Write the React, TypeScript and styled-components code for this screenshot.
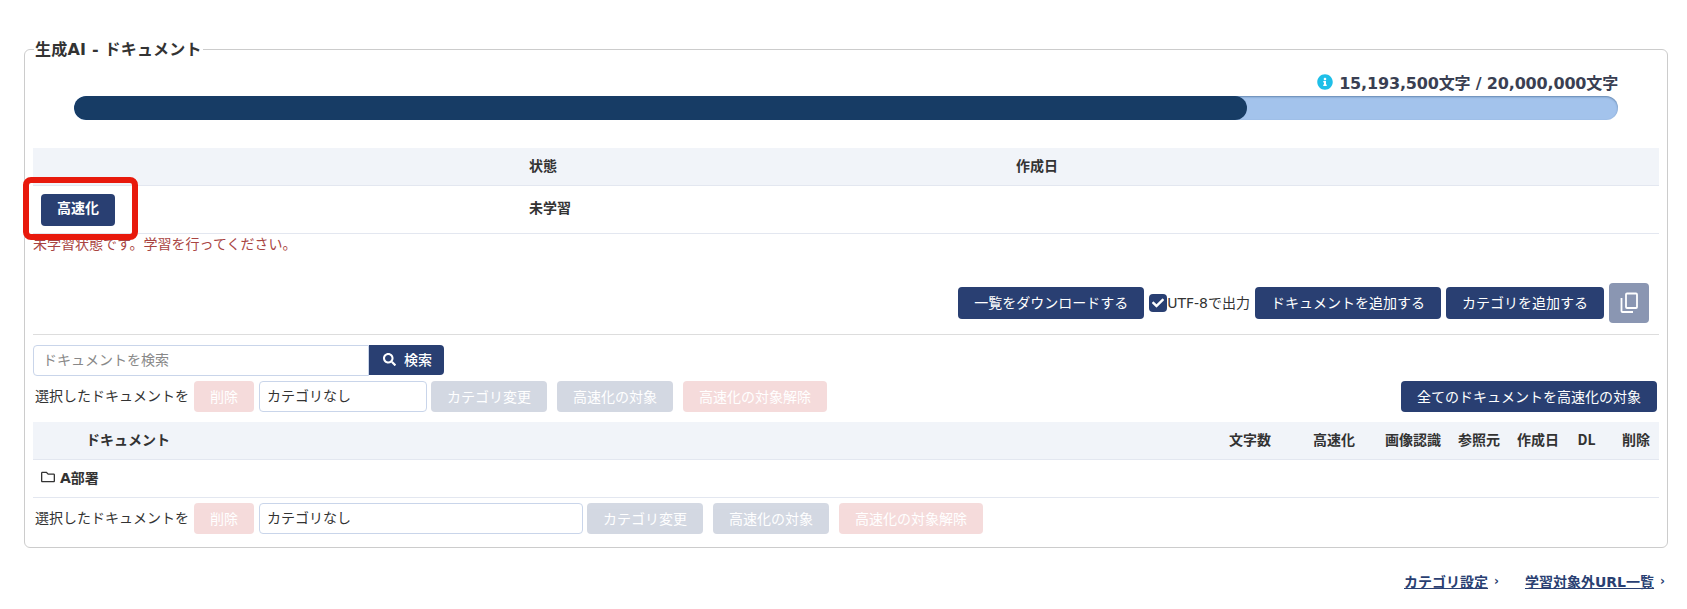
import { createGlobalStyle, styled } from "styled-components";
import { FaCheck, FaInfoCircle, FaRegFolder, FaSearch } from "react-icons/fa";

const GlobalStyle = createGlobalStyle`
  body {
    margin: 0;
    background: #ffffff;
    color: #333333;
    font-family: "DejaVu Sans", "Noto Sans CJK JP", sans-serif;
    font-size: 14px;
  }
`;

const Page = styled.div`
  width: 1687px;
  height: 609px;
  box-sizing: border-box;
  padding: 38px 19px 0 24px;
  overflow: hidden;
`;

const Panel = styled.fieldset`
  margin: 0;
  padding: 0 8px 12px;
  height: 510px;
  box-sizing: border-box;
  border: 1px solid #cccccc;
  border-radius: 6px;
  min-width: 0;
`;

const Title = styled.legend`
  margin-left: 1px;
  padding: 2px 1px 0;
  font-size: 16px;
  line-height: 20px;
  font-weight: 700;
  letter-spacing: 0.2px;
  color: #333333;
`;

const Usage = styled.div`
  display: flex;
  justify-content: flex-end;
  align-items: center;
  gap: 6px;
  height: 24px;
  margin-top: 10px;
  padding-right: 41px;
  font-size: 16px;
  font-weight: 700;
  letter-spacing: -0.17px;
  color: #3a3f52;
`;

const Bar = styled.div`
  height: 24px;
  margin: 2px 41px 0;
  border-radius: 12px;
  background: #a3c3ec;
  box-shadow: inset 0 1px 2px rgba(23, 60, 101, 0.45);
  overflow: hidden;
`;

const BarFill = styled.div`
  height: 100%;
  border-radius: 12px;
  background: #173c65;
`;

const StatusHead = styled.div`
  display: grid;
  grid-template-columns: 496px 487px 1fr;
  align-items: center;
  height: 38px;
  margin-top: 28px;
  padding-bottom: 4px;
  background: #f1f4f9;
  border-bottom: 1px solid #e3e7f0;
  box-sizing: border-box;
  font-weight: 700;
`;

const StatusRow = styled.div`
  display: grid;
  grid-template-columns: 496px 487px 1fr;
  align-items: center;
  height: 48px;
  border-bottom: 1px solid #e3e7f0;
  box-sizing: border-box;
  font-weight: 700;
`;

const StatusText = styled.span`
  padding-bottom: 6px;
`;

const ButtonCell = styled.div`
  padding-left: 8px;
`;

const Marked = styled.span`
  position: relative;
  display: inline-flex;
`;

const Highlight = styled.span`
  position: absolute;
  top: -17px;
  left: -18px;
  right: -23px;
  bottom: -14px;
  border: 6px solid #e8190c;
  border-radius: 8px;
  pointer-events: none;
`;

const Btn = styled.button<{ $tone?: "navy" | "red"; $off?: boolean }>`
  height: 32px;
  padding: 0 16px 2px;
  border: none;
  border-radius: 4px;
  background: ${(p) => (p.$tone === "red" ? "#cf4f4f" : "#293f72")};
  color: #ffffff;
  font-family: inherit;
  font-size: 14px;
  font-weight: 400;
  white-space: nowrap;
  opacity: ${(p) => (p.$off ? 0.2 : 1)};
`;

const BoldBtn = styled(Btn)`
  padding-bottom: 6px;
  font-weight: 700;
`;

const SmallBtn = styled(Btn)`
  height: 31px;
`;

const ErrorText = styled.div`
  height: 24px;
  line-height: 20px;
  color: #a94442;
`;

const Toolbar = styled.div`
  display: flex;
  justify-content: flex-end;
  align-items: center;
  gap: 5px;
  height: 40px;
  margin-top: 25px;
  padding-right: 10px;
`;

const CheckLabel = styled.label`
  display: flex;
  align-items: center;
  font-size: 14px;
  color: #333333;
`;

const CheckText = styled.span`
  padding-bottom: 3px;
`;

const CheckBox = styled.span`
  display: flex;
  align-items: center;
  justify-content: center;
  width: 18px;
  height: 18px;
  border-radius: 4px;
  background: #293f72;
  color: #ffffff;
  font-size: 12px;
`;

const CopyBtn = styled.button`
  display: flex;
  align-items: center;
  justify-content: center;
  width: 40px;
  height: 40px;
  padding: 0;
  border: none;
  border-radius: 4px;
  background: #8a96b2;
  color: #ffffff;
`;

const Divider = styled.hr`
  height: 1px;
  margin: 11px 0 0;
  border: none;
  background: #dddddd;
`;

const SearchRow = styled.div`
  display: flex;
  align-items: flex-start;
  height: 36px;
  margin-top: 10px;
`;

const SearchInput = styled.input`
  width: 336px;
  height: 31px;
  box-sizing: border-box;
  padding: 0 9px 2px;
  border: 1px solid #c9d5ea;
  border-radius: 4px 0 0 4px;
  font-family: inherit;
  font-size: 14px;
  outline: none;
  &::placeholder {
    color: #888888;
  }
`;

const SearchBtn = styled.button`
  display: flex;
  align-items: center;
  gap: 8px;
  width: 75px;
  height: 30px;
  padding: 0 0 2px 14px;
  border: none;
  border-radius: 0 4px 4px 0;
  background: #293f72;
  color: #ffffff;
  font-family: inherit;
  font-size: 14px;
  font-weight: 500;
`;

const ActionRow = styled.div`
  display: flex;
  align-items: center;
  height: 31px;
  padding-left: 2px;
`;

const ActionLabel = styled.span`
  width: 159px;
  flex: none;
  padding-bottom: 3px;
  white-space: nowrap;
`;

const ActionSet = styled.div`
  display: flex;
  align-items: center;
  gap: 10px;
  margin-left: 4px;
`;

const CategorySelect = styled.select<{ $wide?: boolean }>`
  width: ${(p) => (p.$wide ? "324px" : "168px")};
  height: 31px;
  margin-left: 5px;
  padding: 0 7px 2px;
  box-sizing: border-box;
  appearance: none;
  border: 1px solid #c9d5ea;
  border-radius: 4px;
  background: #ffffff;
  color: #333333;
  font-family: inherit;
  font-size: 14px;
`;

const AllBtn = styled(SmallBtn)`
  margin-left: auto;
  margin-right: 2px;
`;

const DocHead = styled.div`
  display: grid;
  grid-template-columns: 1fr 84px 84px 74px 58px 60px 37px 54px;
  align-items: center;
  height: 38px;
  margin-top: 10px;
  padding-bottom: 4px;
  box-sizing: border-box;
  background: #f1f4f9;
  border-bottom: 1px solid #e3e7f0;
  font-weight: 700;
`;

const DocTitle = styled.span`
  padding-left: 53px;
`;

const DocCol = styled.span<{ $right?: boolean; $latin?: boolean }>`
  text-align: ${(p) => (p.$right ? "right" : "center")};
  padding-right: ${(p) => (p.$right ? "9px" : "0")};
  font-family: ${(p) => (p.$latin ? '"Noto Sans CJK JP", sans-serif' : "inherit")};
`;

const FolderRow = styled.div`
  display: flex;
  align-items: center;
  gap: 5px;
  height: 38px;
  margin-bottom: 5px;
  padding: 0 0 3px 8px;
  box-sizing: border-box;
  border-bottom: 1px solid #e3e7f0;
  font-size: 14px;
  font-weight: 700;
`;

const Links = styled.div`
  display: flex;
  justify-content: flex-end;
  gap: 26px;
  margin-top: 23px;
  padding-right: 3px;
`;

const LinkItem = styled.div`
  display: flex;
  align-items: center;
  gap: 6px;
`;

const FootLink = styled.a`
  color: #293f72;
  font-size: 14px;
  font-weight: 700;
  text-decoration: underline;
`;

const Arrow = styled.span`
  color: #293f72;
  font-size: 12px;
  font-weight: 700;
`;

const columns = ["文字数", "高速化", "画像認識", "参照元", "作成日"];

const Actions = ({ wide }: { wide?: boolean }) => (
  <>
    <ActionLabel>選択したドキュメントを</ActionLabel>
    <SmallBtn $tone="red" $off>
      削除
    </SmallBtn>
    <CategorySelect $wide={wide} defaultValue="none">
      <option value="none">カテゴリなし</option>
    </CategorySelect>
    <ActionSet>
      <SmallBtn $off>カテゴリ変更</SmallBtn>
      <SmallBtn $off>高速化の対象</SmallBtn>
      <SmallBtn $tone="red" $off>
        高速化の対象解除
      </SmallBtn>
    </ActionSet>
  </>
);

const App = () => {
  const used = 15193500;
  const limit = 20000000;

  return (
    <Page>
      <GlobalStyle />
      <Panel>
        <Title>生成AI - ドキュメント</Title>
        <Usage>
          <FaInfoCircle color="#1fbfe8" size={16} />
          <span>15,193,500文字 / 20,000,000文字</span>
        </Usage>
        <Bar>
          <BarFill style={{ width: `${(used / limit) * 100}%` }} />
        </Bar>

        <StatusHead>
          <span />
          <span>状態</span>
          <span>作成日</span>
        </StatusHead>
        <StatusRow>
          <ButtonCell>
            <Marked>
              <BoldBtn>高速化</BoldBtn>
              <Highlight />
            </Marked>
          </ButtonCell>
          <StatusText>未学習</StatusText>
          <span />
        </StatusRow>
        <ErrorText>未学習状態です。学習を行ってください。</ErrorText>

        <Toolbar>
          <Btn>一覧をダウンロードする</Btn>
          <CheckLabel>
            <CheckBox>
              <FaCheck />
            </CheckBox>
            <CheckText>UTF-8で出力</CheckText>
          </CheckLabel>
          <Btn>ドキュメントを追加する</Btn>
          <Btn>カテゴリを追加する</Btn>
          <CopyBtn>
            <svg width="24" height="24" viewBox="0 0 24 24" fill="none" stroke="currentColor" strokeWidth="1.8">
              <rect x="9" y="2.5" width="11" height="14.5" rx="1" />
              <path d="M4.5 7v13a1 1 0 0 0 1 1H16" />
            </svg>
          </CopyBtn>
        </Toolbar>
        <Divider />

        <SearchRow>
          <SearchInput placeholder="ドキュメントを検索" />
          <SearchBtn>
            <FaSearch size={13} />
            検索
          </SearchBtn>
        </SearchRow>
        <ActionRow>
          <Actions />
          <AllBtn>全てのドキュメントを高速化の対象</AllBtn>
        </ActionRow>

        <DocHead>
          <DocTitle>ドキュメント</DocTitle>
          {columns.map((c) => (
            <DocCol key={c}>{c}</DocCol>
          ))}
          <DocCol $latin>DL</DocCol>
          <DocCol $right>削除</DocCol>
        </DocHead>
        <FolderRow>
          <FaRegFolder size={14} />
          A部署
        </FolderRow>
        <ActionRow>
          <Actions wide />
        </ActionRow>
      </Panel>
      <Links>
        <LinkItem>
          <FootLink>カテゴリ設定</FootLink>
          <Arrow>›</Arrow>
        </LinkItem>
        <LinkItem>
          <FootLink>学習対象外URL一覧</FootLink>
          <Arrow>›</Arrow>
        </LinkItem>
      </Links>
    </Page>
  );
};

export default App;
